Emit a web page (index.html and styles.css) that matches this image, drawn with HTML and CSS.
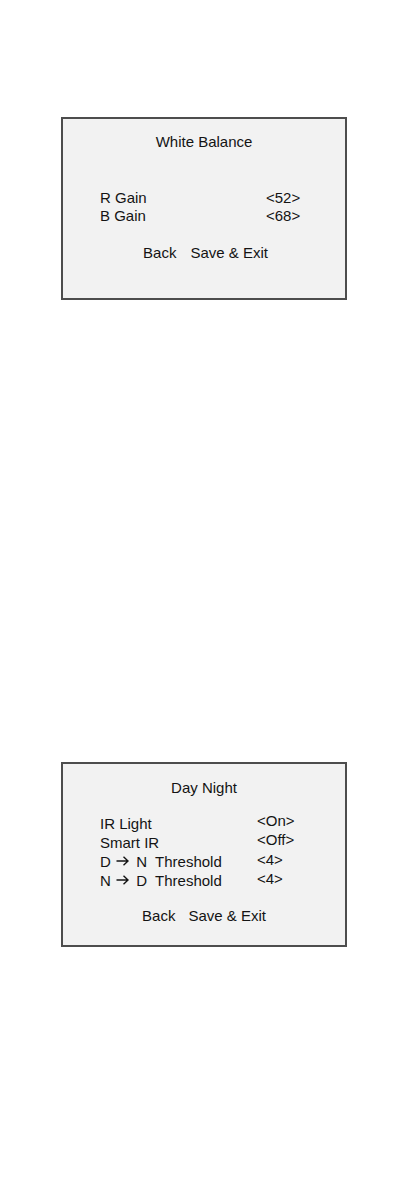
FILE: index.html
```html
<!DOCTYPE html>
<html>
<head>
<meta charset="utf-8">
<link rel="stylesheet" href="styles.css">
</head>
<body>
<main class="page">
  <section class="osd osd-wb">
    <h2 class="osd-title">White Balance</h2>
    <div class="rows rows-wb">
      <span class="label">R Gain</span><span class="value">&lt;52&gt;</span>
      <span class="label">B Gain</span><span class="value">&lt;68&gt;</span>
    </div>
    <div class="actions actions-wb"><span>Back</span><span>Save &amp; Exit</span></div>
  </section>

  <section class="osd osd-dn">
    <h2 class="osd-title">Day Night</h2>
    <div class="rows rows-dn">
      <span class="label">IR Light</span><span class="value up">&lt;On&gt;</span>
      <span class="label">Smart IR</span><span class="value up">&lt;Off&gt;</span>
      <span class="label">D <svg class="arrow" width="13" height="10" viewBox="0 0 13 10" aria-label="→"><path d="M0.5 5H12M7.5 0.8L12 5L7.5 9.2" fill="none" stroke="#141414" stroke-width="1.4"/></svg> N  Threshold</span><span class="value up2">&lt;4&gt;</span>
      <span class="label">N <svg class="arrow" width="13" height="10" viewBox="0 0 13 10" aria-label="→"><path d="M0.5 5H12M7.5 0.8L12 5L7.5 9.2" fill="none" stroke="#141414" stroke-width="1.4"/></svg> D  Threshold</span><span class="value up2">&lt;4&gt;</span>
    </div>
    <div class="actions actions-dn"><span>Back</span><span>Save &amp; Exit</span></div>
  </section>
</main>
</body>
</html>
```

FILE: styles.css
```css
html, body {
  margin: 0;
  padding: 0;
  background: #ffffff;
}

.page {
  display: flex;
  flex-direction: column;
  align-items: flex-start;
  padding: 117px 0 0 61px;
  height: 1191px;
  box-sizing: border-box;
  font-family: "Liberation Sans", Arial, sans-serif;
  font-size: 15px;
  color: #141414;
}

.osd {
  box-sizing: border-box;
  width: 286px;
  background: #f2f2f2;
  border: 2px solid #4d4d4d;
  display: flex;
  flex-direction: column;
}

.osd-wb {
  height: 183px;
  padding: 14px 0 0 37px;
}

.osd-dn {
  height: 185px;
  margin-top: 462px;
  padding: 15px 0 0 37px;
}

.osd-title {
  margin: 0;
  font-size: 15px;
  font-weight: normal;
  line-height: 18px;
  text-align: center;
  margin-left: -37px;
}

.rows {
  display: grid;
  white-space: pre;
}

.rows-wb {
  grid-template-columns: 166px auto;
  grid-auto-rows: 18px;
  line-height: 18px;
  margin-top: 38px;
}

.rows-dn {
  grid-template-columns: 157px auto;
  grid-auto-rows: 19px;
  line-height: 19px;
  margin-top: 17px;
}

.arrow {
  vertical-align: 1px;
  margin: 0 3px 0 1px;
}

.value.up {
  margin-top: -3px;
}

.value.up2 {
  margin-top: -2px;
}

.actions {
  display: flex;
  justify-content: center;
  line-height: 18px;
  margin-left: -37px;
}

.actions-wb {
  gap: 14px;
  margin-top: 19px;
  padding-left: 3px;
}

.actions-dn {
  gap: 13px;
  margin-top: 17px;
  padding-left: 0;
}
```
